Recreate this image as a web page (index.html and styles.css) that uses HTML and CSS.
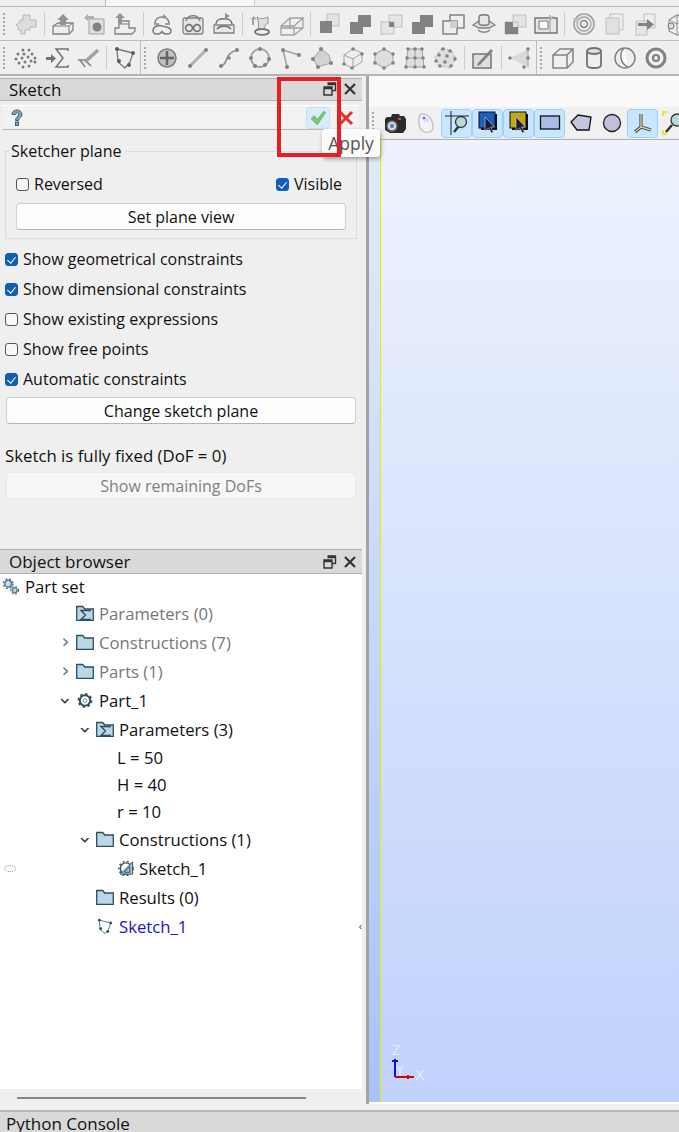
FILE: index.html
```html
<!DOCTYPE html>
<html lang="en">
<head>
<meta charset="utf-8">
<title>Sketch</title>
<link rel="stylesheet" href="styles.css">
</head>
<body>
<svg class="sprite" aria-hidden="true">
<defs>
<symbol id="i-puzzle" viewBox="0 0 24 24"><path d="M2 13l4-3V8h3V3h7v5h6v7h-6v3h-5v4H7v-4H4v-3z" fill="#dcdcdc" stroke="#b0b0b0"/></symbol>
<symbol id="i-extrude" viewBox="0 0 24 24"><path d="M2 22v-8l5-3h15v7l-4 4z" fill="#eee" stroke="#777" stroke-width="1.3"/><path d="M2 14h16v8M18 14l4-3" fill="none" stroke="#777"/><path d="M12 2l6 6h-3v5H9V8H6z" fill="#8a8a8a"/></symbol>
<symbol id="i-revolve" viewBox="0 0 24 24"><path d="M7 7h15v15H7z" fill="#ddd" stroke="#999"/><circle cx="15" cy="15" r="4.5" fill="#777"/><path d="M2 6l4-4v2h6v3H6v2z" fill="#aaa"/></symbol>
<symbol id="i-boxup" viewBox="0 0 24 24"><path d="M2 22v-6h4V9h10v7h6v3l-3 3z" fill="#eee" stroke="#777" stroke-width="1.3"/><path d="M6 12h10" stroke="#777"/><path d="M7 1l5 5H9v6H5V6H2z" fill="#8a8a8a"/></symbol>
<symbol id="i-pipe1" viewBox="0 0 24 24"><path d="M5 11C6 3 18 3 19 11M3 19c0-5 5-6 9-5s9 1 9 5c0 4-8 4-9 0-1 4-9 4-9 0zM4 12h5M15 12h5" fill="none" stroke="#777" stroke-width="1.6"/><path d="M13 2l4 3-4 2z" fill="#888"/></symbol>
<symbol id="i-pipe2" viewBox="0 0 24 24"><rect x="2" y="6" width="20" height="16" rx="2" fill="#e6e6e6" stroke="#777" stroke-width="1.3"/><circle cx="8" cy="16" r="3.4" fill="none" stroke="#666" stroke-width="1.6"/><circle cx="16" cy="16" r="3.4" fill="none" stroke="#666" stroke-width="1.6"/><path d="M5 9C7 2 17 2 19 9" fill="none" stroke="#777" stroke-width="1.5"/></symbol>
<symbol id="i-pipe3" viewBox="0 0 24 24"><path d="M2 13h20v8H2z" fill="#e6e6e6" stroke="#777" stroke-width="1.3"/><path d="M4 12c0-7 16-7 16 0M5 17c4-4 10-4 14 0" fill="none" stroke="#666" stroke-width="1.6"/><path d="M13 1l5 3-5 3z" fill="#888"/></symbol>
<symbol id="i-pipe4" viewBox="0 0 24 24"><path d="M8 5c3 2 7 2 11 0v6c-3 2-4 4-3 6H9c1-3 1-7-1-12z" fill="#ddd" stroke="#888"/><ellipse cx="13" cy="20" rx="7" ry="2.8" fill="none" stroke="#666" stroke-width="1.8"/><path d="M1 8l4-4 3 4-3-1v6H3V7z" fill="#999"/></symbol>
<symbol id="i-wire" viewBox="0 0 24 24"><path d="M1 14L10 6h13v10l-9 7H1zM1 14h13v9M14 14l9-8M10 6v10H1M10 16l13 0" fill="#eee" fill-opacity=".6" stroke="#999" stroke-width="1.3"/></symbol>
<symbol id="i-bool1" viewBox="0 0 24 24"><rect x="10" y="2" width="12" height="12" fill="#e2e2e2" stroke="#bbb"/><rect x="3" y="9" width="12" height="12" fill="#777"/></symbol>
<symbol id="i-bool2" viewBox="0 0 24 24"><rect x="10" y="3" width="13" height="12" fill="#777"/><rect x="2" y="10" width="13" height="12" fill="#777"/></symbol>
<symbol id="i-bool3" viewBox="0 0 24 24"><rect x="10" y="3" width="13" height="12" fill="#e4e4e4" stroke="#bbb"/><rect x="2" y="10" width="13" height="12" fill="#e4e4e4" stroke="#bbb"/><rect x="10" y="10" width="5" height="5" fill="#777"/></symbol>
<symbol id="i-bool4" viewBox="0 0 24 24"><rect x="9" y="3" width="14" height="13" fill="none" stroke="#777" stroke-width="1.5"/><rect x="2" y="9" width="14" height="13" fill="#eee" stroke="#777" stroke-width="1.5"/><rect x="9" y="9" width="7" height="7" fill="#ccc"/></symbol>
<symbol id="i-hat" viewBox="0 0 24 24"><path d="M1 13l6-4h10l6 4-6 3H7z" fill="#ddd" stroke="#777" stroke-width="1.3"/><path d="M7 5c0-3 10-3 10 0v6c0 3-10 3-10 0z" fill="#e6e6e6" stroke="#666" stroke-width="1.3"/><path d="M6 18c3 3 9 3 12 0" fill="none" stroke="#777" stroke-width="1.5"/></symbol>
<symbol id="i-bool5" viewBox="0 0 24 24"><rect x="10" y="3" width="13" height="12" fill="#e2e2e2" stroke="#bbb"/><rect x="2" y="10" width="13" height="12" fill="#e2e2e2" stroke="#bbb"/><path d="M2 10h8v5h5v7H2z" fill="#777"/></symbol>
<symbol id="i-frame" viewBox="0 0 24 24"><path d="M1 6h22v15H1z" fill="#e6e6e6" stroke="#666" stroke-width="1.4"/><path d="M5 9h9v8H5z" fill="#fff" stroke="#666"/><path d="M16 3v17M19 4l-5 7" stroke="#aaa" stroke-width="1.5"/></symbol>
<symbol id="i-spiral" viewBox="0 0 24 24"><circle cx="13" cy="12" r="10" fill="none" stroke="#999" stroke-width="1.6"/><circle cx="13" cy="12" r="7" fill="none" stroke="#999" stroke-width="1.4"/><circle cx="13" cy="12" r="3.5" fill="none" stroke="#777" stroke-width="1.5"/><path d="M1 6h7v5z" fill="#bbb"/></symbol>
<symbol id="i-pages" viewBox="0 0 24 24"><rect x="8" y="2" width="13" height="16" fill="#eee" stroke="#bbb"/><rect x="4" y="6" width="13" height="16" fill="#e0e0e0" stroke="#bbb"/></symbol>
<symbol id="i-move" viewBox="0 0 24 24"><rect x="11" y="2" width="11" height="14" fill="#eee" stroke="#bbb"/><rect x="3" y="9" width="11" height="14" fill="#e6e6e6" stroke="#bbb"/><path d="M5 11h9V7l7 5.500-7 5.500v-4H5z" fill="#777"/></symbol>
<symbol id="i-cut" viewBox="0 0 24 24"><path d="M5 8l8-5 9 3v12l-9 5-8-4z" fill="none" stroke="#888" stroke-width="1.2"/><path d="M13 3v20M5 8l8 4 9-6" fill="none" stroke="#888"/><circle cx="7" cy="14" r="3" fill="#ddd" stroke="#666"/></symbol>
<symbol id="i-dots" viewBox="0 0 24 24"><g fill="#6e6e6e"><circle cx="9" cy="4" r="1.500"/><circle cx="15" cy="4" r="1.500"/><circle cx="4" cy="8" r="1.500"/><circle cx="10" cy="8" r="1.500"/><circle cx="18" cy="8" r="1.500"/><circle cx="2" cy="13" r="1.500"/><circle cx="8" cy="12" r="1.500"/><circle cx="14" cy="11" r="1.500"/><circle cx="21" cy="12" r="1.500"/><circle cx="5" cy="17" r="1.500"/><circle cx="11" cy="16" r="1.500"/><circle cx="17" cy="15" r="1.500"/><circle cx="21" cy="16" r="1.500"/><circle cx="9" cy="21" r="1.500"/><circle cx="15" cy="20" r="1.500"/></g></symbol>
<symbol id="i-sigma" viewBox="0 0 24 24"><path d="M1 11h5V8l5 4.500L6 17v-3H1z" fill="#666"/><path d="M23 5V3H11l7 9-7 9h12v-2" fill="none" stroke="#666" stroke-width="1.500"/></symbol>
<symbol id="i-check" viewBox="0 0 24 24"><path d="M2 14h9M9 14l6 6M4 14l5 7" fill="none" stroke="#777" stroke-width="1.500"/><path d="M9 16L22 4" stroke="#999" stroke-width="3.500"/></symbol>
<symbol id="i-sketch" viewBox="0 0 24 24"><path d="M4 3l16 4-3 9-5 6-7-6z" fill="none" stroke="#56707c" stroke-width="1.300"/><g fill="#2e5563"><circle cx="4" cy="3" r="2"/><circle cx="20" cy="7" r="2"/><circle cx="6" cy="15" r="2"/><circle cx="16" cy="19" r="2"/></g></symbol>
<symbol id="i-point" viewBox="0 0 24 24"><circle cx="12" cy="12" r="9" fill="#bdbdbd" stroke="#707070" stroke-width="1.500"/><path d="M12 5v14M5 12h14" stroke="#555" stroke-width="2.500"/></symbol>
<symbol id="i-line" viewBox="0 0 24 24"><path d="M4 20L20 4" stroke="#aaa" stroke-width="3"/><circle cx="4" cy="20" r="2" fill="#777"/><circle cx="20" cy="4" r="2" fill="#777"/></symbol>
<symbol id="i-curve" viewBox="0 0 24 24"><path d="M4 20c8-2 2-12 16-16" fill="none" stroke="#888" stroke-width="1.800"/><g fill="#777"><circle cx="4" cy="20" r="2"/><circle cx="20" cy="4" r="2"/><circle cx="12" cy="12" r="1.800"/></g></symbol>
<symbol id="i-circle" viewBox="0 0 24 24"><circle cx="12" cy="12" r="9" fill="none" stroke="#999" stroke-width="1.800"/><g fill="#777"><circle cx="12" cy="3" r="2"/><circle cx="3" cy="12" r="2"/><circle cx="21" cy="13" r="2"/><circle cx="7" cy="20" r="2"/><circle cx="17" cy="19" r="2"/></g></symbol>
<symbol id="i-poly" viewBox="0 0 24 24"><path d="M4 4l16 5M4 4l4 17" fill="none" stroke="#999" stroke-width="1.500"/><g fill="#777"><circle cx="4" cy="4" r="2"/><circle cx="20" cy="9" r="2"/><circle cx="8" cy="21" r="2"/></g></symbol>
<symbol id="i-face" viewBox="0 0 24 24"><path d="M11 3l8 6 2 8-13 4-5-8z" fill="#d0d0d0" stroke="#999"/><g fill="#777"><circle cx="11" cy="3" r="2"/><circle cx="21" cy="17" r="2"/><circle cx="8" cy="21" r="2"/><circle cx="3" cy="13" r="2"/></g></symbol>
<symbol id="i-shell" viewBox="0 0 24 24"><path d="M3 9l9-6 9 4v9l-10 6-8-4zM3 9l9 4 9-6M12 13v9" fill="#eee" stroke="#999"/><g fill="#777"><circle cx="12" cy="3" r="1.800"/><circle cx="21" cy="8" r="1.800"/><circle cx="3" cy="18" r="1.800"/><circle cx="11" cy="22" r="1.800"/></g></symbol>
<symbol id="i-solid" viewBox="0 0 24 24"><path d="M3 8l9-5 9 5v9l-9 5-9-5z" fill="#ddd" stroke="#999"/><g fill="#777"><circle cx="12" cy="3" r="1.800"/><circle cx="21" cy="8" r="1.800"/><circle cx="3" cy="8" r="1.800"/><circle cx="3" cy="17" r="1.800"/><circle cx="21" cy="17" r="1.800"/><circle cx="12" cy="22" r="1.800"/></g></symbol>
<symbol id="i-comp" viewBox="0 0 24 24"><path d="M5 3h14l2 18H3z" fill="#ddd" stroke="#999"/><path d="M12 3v18M4 12h16" stroke="#999"/><g fill="#777"><circle cx="5" cy="3" r="1.800"/><circle cx="19" cy="3" r="1.800"/><circle cx="12" cy="3" r="1.800"/><circle cx="4" cy="12" r="1.800"/><circle cx="12" cy="12" r="1.800"/><circle cx="20" cy="12" r="1.800"/><circle cx="3" cy="21" r="1.800"/><circle cx="12" cy="21" r="1.800"/><circle cx="21" cy="21" r="1.800"/></g></symbol>
<symbol id="i-compd" viewBox="0 0 24 24"><path d="M8 2l10 3 4 8-6 9-12-3-3-8z" fill="#ddd" stroke="#aaa" stroke-dasharray="3 2"/><g fill="#777"><circle cx="9" cy="3" r="1.800"/><circle cx="16" cy="5" r="1.800"/><circle cx="5" cy="9" r="1.800"/><circle cx="13" cy="10" r="1.800"/><circle cx="21" cy="13" r="1.800"/><circle cx="2" cy="15" r="1.800"/><circle cx="11" cy="16" r="1.800"/><circle cx="17" cy="20" r="1.800"/><circle cx="6" cy="20" r="1.800"/></g></symbol>
<symbol id="i-edit" viewBox="0 0 24 24"><path d="M2 8h18v14H2z" fill="#ddd" stroke="#666" stroke-width="1.500"/><path d="M7 17l-1 3 3-1L22 5l-2-2z" fill="#777"/></symbol>
<symbol id="i-sector" viewBox="0 0 24 24"><path d="M2 12L20 3v18z" fill="#d8d8d8"/><path d="M20 3v18" stroke="#999"/><g fill="#777"><circle cx="2" cy="12" r="1.800"/><circle cx="20" cy="3" r="1.800"/><circle cx="20" cy="12" r="1.800"/><circle cx="16" cy="21" r="1.800"/></g></symbol>
<symbol id="i-box" viewBox="0 0 24 24"><path d="M2 9l7-6h13v13l-6 6H2zM2 9h14v13M16 9l6-6" fill="none" stroke="#777" stroke-width="1.500"/></symbol>
<symbol id="i-cyl" viewBox="0 0 24 24"><path d="M5 5v14c0 4 14 4 14 0V5" fill="none" stroke="#666" stroke-width="1.800"/><ellipse cx="12" cy="5" rx="7" ry="3" fill="#ddd" stroke="#666" stroke-width="1.800"/></symbol>
<symbol id="i-sphere" viewBox="0 0 24 24"><circle cx="12" cy="12" r="10" fill="#eee" stroke="#777" stroke-width="1.500"/><path d="M11 2c-6 7-3 16 4 19" fill="#fff" stroke="#777" stroke-width="1.500"/></symbol>
<symbol id="i-torus" viewBox="0 0 24 24"><circle cx="12" cy="12" r="9" fill="none" stroke="#777" stroke-width="3"/><circle cx="12" cy="12" r="3" fill="none" stroke="#777" stroke-width="2.200"/></symbol>
<symbol id="i-restore" viewBox="0 0 14 14"><path d="M4.500 1h8v7.500h-3M1 5h8v8H1zM1 6.500h8M4.500 2.500h8" fill="none" stroke="#333" stroke-width="1.400"/></symbol>
<symbol id="i-close" viewBox="0 0 14 14"><path d="M2 2l10 10M12 2L2 12" stroke="#333" stroke-width="2.200"/></symbol>
<symbol id="i-folder" viewBox="0 0 18 16"><path d="M.7 14.800V1h6l2 2.500h8.600v11.300z" fill="#b9d7e8" stroke="#2c4f5e" stroke-width="1.300"/></symbol>
<symbol id="i-param" viewBox="0 0 18 16"><path d="M.7 14.800V1h6l2 2.500h8.600v11.300z" fill="#b9d7e8" stroke="#2c4f5e" stroke-width="1.300"/><path d="M14 6V5H5l4.500 4.500L5 14h9v-1" fill="none" stroke="#2c4f5e" stroke-width="1.400"/></symbol>
<symbol id="i-gear" viewBox="0 0 18 18"><circle cx="9" cy="9" r="5.500" fill="none" stroke="#33515e" stroke-width="2.200"/><circle cx="9" cy="9" r="7" fill="none" stroke="#33515e" stroke-width="1.800" stroke-dasharray="2.500 3"/><circle cx="9" cy="9" r="2" fill="none" stroke="#6d8894"/></symbol>
<symbol id="i-gears" viewBox="0 0 18 18"><circle cx="6" cy="6" r="3.500" fill="#cfdfe8" stroke="#56788a" stroke-width="1.600"/><circle cx="6" cy="6" r="5" fill="none" stroke="#56788a" stroke-width="1.500" stroke-dasharray="2 2"/><circle cx="13" cy="13" r="2.500" fill="#cfdfe8" stroke="#56788a" stroke-width="1.400"/><circle cx="13" cy="13" r="4" fill="none" stroke="#56788a" stroke-width="1.400" stroke-dasharray="2 1.800"/></symbol>
<symbol id="i-sk-gear" viewBox="0 0 18 18"><circle cx="9" cy="9" r="6" fill="#fff" stroke="#33515e" stroke-width="1.500"/><circle cx="9" cy="9" r="7.500" fill="none" stroke="#33515e" stroke-width="1.500" stroke-dasharray="2 2.500"/><path d="M3 15L16 2v13zM7 13l6-6v6z" fill="#a9c5d4" stroke="#33515e"/></symbol>
<symbol id="i-camera" viewBox="0 0 24 24"><path d="M4 6h4l1-3h7l1 2h4l2 3v10l-3 4H7l-5-3V8z" fill="#2b2b2b"/><circle cx="9" cy="15" r="5" fill="#cfd8e6" stroke="#666" stroke-width="1.500"/><circle cx="9" cy="15" r="2" fill="#5d76b0"/><rect x="15" y="7" width="3" height="2" fill="#d43"/></symbol>
<symbol id="i-mouse" viewBox="0 0 24 24"><path d="M7 3c7-1 12 6 12 13 0 5-6 7-10 4C5 18 3 8 7 3z" fill="#f4f4f4" stroke="#c0c0c0" stroke-width="1.300"/><path d="M9 5c3 0 5 2 6 5-3 2-6 0-7-2z" fill="#d8dcec"/><circle cx="10" cy="7" r="1.300" fill="#6e74c9"/></symbol>
<symbol id="i-vzoom" viewBox="0 0 24 24"><path d="M6 0v24M0 5h24" stroke="#222" stroke-width="1"/><path d="M9 21l5-6" stroke="#333" stroke-width="2.500"/><circle cx="16" cy="11" r="5.500" fill="#b8d8d8" stroke="#333" stroke-width="1.300"/></symbol>
<symbol id="i-selblue" viewBox="0 0 24 24"><rect x="5" y="3" width="16" height="16" fill="#111"/><rect x="3" y="1" width="16" height="16" fill="#1c5fc0" stroke="#111"/><path d="M9 6v14l3.500-3 3 5 2-1-3-5h4z" fill="#1a1a3a" stroke="#d8d8e8" stroke-width=".6"/></symbol>
<symbol id="i-selyellow" viewBox="0 0 24 24"><rect x="5" y="3" width="16" height="16" fill="#111"/><rect x="3" y="1" width="16" height="16" fill="#c2a614" stroke="#111"/><path d="M9 6v14l3.500-3 3 5 2-1-3-5h4z" fill="#1a1a3a" stroke="#d8d8e8" stroke-width=".6"/></symbol>
<symbol id="i-rect" viewBox="0 0 24 24"><rect x="2.500" y="5" width="19" height="13" fill="#a9bce6" stroke="#111" stroke-width="1.300"/></symbol>
<symbol id="i-penta" viewBox="0 0 24 24"><path d="M2 11l7-7 13 2-2 13H8z" fill="#c5c5e0" stroke="#111" stroke-width="1.300"/></symbol>
<symbol id="i-round" viewBox="0 0 24 24"><circle cx="12" cy="12" r="8.500" fill="#c0c0dc" stroke="#222" stroke-width="1.300"/></symbol>
<symbol id="i-axes" viewBox="0 0 24 24"><path d="M10 3v13M10 16l-6 5M10 16l10 3" stroke="#333" stroke-width="3"/><path d="M10 3v13M10 16l-6 5M10 16l10 3" stroke="#d9d3a8" stroke-width="1.400"/></symbol>
<symbol id="i-vzoom2" viewBox="0 0 24 24"><path d="M1 5V1h4M1 19v4h4" fill="none" stroke="#e8e000" stroke-width="1.500"/><path d="M4 21l6-7" stroke="#333" stroke-width="2.500"/><circle cx="15" cy="9" r="6" fill="#b8d8d8" stroke="#333" stroke-width="1.300"/></symbol>
<symbol id="i-help" viewBox="0 0 14 18"><path d="M2 5.500C2 2 5 1 7 1s5 1.500 5 4.500c0 3-3.500 3-3.500 6H5.500C5.500 8 8.500 8 8.500 5.500 8.500 4 7.500 4 7 4 6 4 5.500 4.500 5.500 5.500z" fill="#7da3b8" stroke="#3f6072"/><rect x="5.500" y="13" width="3" height="3.500" fill="#7da3b8" stroke="#3f6072"/></symbol>
</defs>
</svg>

<div class="app">
  <div class="top-strip"><span class="strip-field"></span></div>

  <div class="tb-row">
    <span class="grip"></span>
    <span class="tool"><svg class="ico"><use href="#i-puzzle"/></svg></span>
    <span class="sep"></span>
    <span class="tool"><svg class="ico"><use href="#i-extrude"/></svg></span>
    <span class="tool"><svg class="ico"><use href="#i-revolve"/></svg></span>
    <span class="tool"><svg class="ico"><use href="#i-boxup"/></svg></span>
    <span class="sep"></span>
    <span class="tool"><svg class="ico"><use href="#i-pipe1"/></svg></span>
    <span class="tool"><svg class="ico"><use href="#i-pipe2"/></svg></span>
    <span class="tool"><svg class="ico"><use href="#i-pipe3"/></svg></span>
    <span class="sep"></span>
    <span class="tool"><svg class="ico"><use href="#i-pipe4"/></svg></span>
    <span class="tool"><svg class="ico"><use href="#i-wire"/></svg></span>
    <span class="sep"></span>
    <span class="tool"><svg class="ico"><use href="#i-bool1"/></svg></span>
    <span class="tool"><svg class="ico"><use href="#i-bool2"/></svg></span>
    <span class="tool"><svg class="ico"><use href="#i-bool3"/></svg></span>
    <span class="tool"><svg class="ico"><use href="#i-bool2"/></svg></span>
    <span class="tool"><svg class="ico"><use href="#i-bool4"/></svg></span>
    <span class="tool"><svg class="ico"><use href="#i-hat"/></svg></span>
    <span class="tool"><svg class="ico"><use href="#i-bool5"/></svg></span>
    <span class="tool"><svg class="ico"><use href="#i-frame"/></svg></span>
    <span class="sep"></span>
    <span class="tool"><svg class="ico"><use href="#i-spiral"/></svg></span>
    <span class="tool"><svg class="ico"><use href="#i-pages"/></svg></span>
    <span class="tool"><svg class="ico"><use href="#i-move"/></svg></span>
    <span class="tool"><svg class="ico"><use href="#i-cut"/></svg></span>
  </div>

  <div class="tb-row tb-row-2">
    <div class="tb-group tb-g1">
      <span class="grip"></span>
      <span class="tool"><svg class="ico"><use href="#i-dots"/></svg></span>
      <span class="tool"><svg class="ico"><use href="#i-sigma"/></svg></span>
      <span class="tool"><svg class="ico"><use href="#i-check"/></svg></span>
      <span class="sep"></span>
      <span class="tool"><svg class="ico"><use href="#i-sketch"/></svg></span>
    </div>
    <div class="tb-group tb-g2">
      <span class="grip"></span>
      <span class="tool"><svg class="ico"><use href="#i-point"/></svg></span>
      <span class="tool"><svg class="ico"><use href="#i-line"/></svg></span>
      <span class="tool"><svg class="ico"><use href="#i-curve"/></svg></span>
      <span class="tool"><svg class="ico"><use href="#i-circle"/></svg></span>
      <span class="tool"><svg class="ico"><use href="#i-poly"/></svg></span>
      <span class="tool"><svg class="ico"><use href="#i-face"/></svg></span>
      <span class="tool"><svg class="ico"><use href="#i-shell"/></svg></span>
      <span class="tool"><svg class="ico"><use href="#i-solid"/></svg></span>
      <span class="tool"><svg class="ico"><use href="#i-comp"/></svg></span>
      <span class="tool"><svg class="ico"><use href="#i-compd"/></svg></span>
      <span class="sep"></span>
      <span class="tool"><svg class="ico"><use href="#i-edit"/></svg></span>
      <span class="sep"></span>
      <span class="tool"><svg class="ico"><use href="#i-sector"/></svg></span>
    </div>
    <div class="tb-group">
      <span class="grip"></span>
      <span class="tool"><svg class="ico"><use href="#i-box"/></svg></span>
      <span class="tool"><svg class="ico"><use href="#i-cyl"/></svg></span>
      <span class="tool"><svg class="ico"><use href="#i-sphere"/></svg></span>
      <span class="tool"><svg class="ico"><use href="#i-torus"/></svg></span>
    </div>
  </div>

  <div class="workspace">
    <aside class="left">
      <section class="dock dock-sketch">
        <header class="dock-title title-sketch">
          <span>Sketch</span>
          <span class="dock-btns"><svg class="dbtn"><use href="#i-restore"/></svg><svg class="dbtn"><use href="#i-close"/></svg></span>
        </header>
        <div class="help-row">
          <svg class="help"><use href="#i-help"/></svg>
          <span class="apply-btn"><svg viewBox="0 0 24 24" class="apply-ico"><path d="M3 13l4-4 4 5L20 3l2 2-11 16z" fill="#7ecb6d" stroke="#5a9e55"/></svg></span>
          <svg viewBox="0 0 24 24" class="cancel-ico"><path d="M3 3l18 18M21 3L3 21" stroke="#e2322c" stroke-width="4.500"/></svg>
        </div>
        <fieldset class="group">
          <legend>Sketcher plane</legend>
          <div class="group-row">
            <label class="chk"><span class="box"></span>Reversed</label>
            <label class="chk"><span class="box on"></span>Visible</label>
          </div>
          <div class="btn">Set plane view</div>
        </fieldset>
        <div class="checks">
          <label class="chk"><span class="box on"></span>Show geometrical constraints</label>
          <label class="chk"><span class="box on"></span>Show dimensional constraints</label>
          <label class="chk"><span class="box"></span>Show existing expressions</label>
          <label class="chk"><span class="box"></span>Show free points</label>
          <label class="chk"><span class="box on"></span>Automatic constraints</label>
        </div>
        <div class="btn btn-wide">Change sketch plane</div>
        <div class="status">Sketch is fully fixed (DoF = 0)</div>
        <div class="btn btn-wide btn-off">Show remaining DoFs</div>
      </section>

      <section class="dock dock-browser">
        <header class="dock-title title-browser">
          <span>Object browser</span>
          <span class="dock-btns"><svg class="dbtn"><use href="#i-restore"/></svg><svg class="dbtn"><use href="#i-close"/></svg></span>
        </header>
        <div class="tree">
          <div class="node node-root"><svg class="ti ti-root"><use href="#i-gears"/></svg>Part set</div>
          <div class="node l1 dim"><span class="ar"></span><svg class="ti"><use href="#i-param"/></svg>Parameters (0)</div>
          <div class="node l1 dim"><span class="ar">&#8250;</span><svg class="ti"><use href="#i-folder"/></svg>Constructions (7)</div>
          <div class="node l1 dim"><span class="ar">&#8250;</span><svg class="ti"><use href="#i-folder"/></svg>Parts (1)</div>
          <div class="node l1"><span class="ar open">&#8250;</span><svg class="ti"><use href="#i-gear"/></svg>Part_1</div>
          <div class="node l2"><span class="ar open">&#8250;</span><svg class="ti"><use href="#i-param"/></svg>Parameters (3)</div>
          <div class="node leaf">L = 50</div>
          <div class="node leaf">H = 40</div>
          <div class="node leaf">r = 10</div>
          <div class="node l2"><span class="ar open">&#8250;</span><svg class="ti"><use href="#i-folder"/></svg>Constructions (1)</div>
          <div class="node l3"><span class="vis"></span><svg class="ti"><use href="#i-sk-gear"/></svg>Sketch_1</div>
          <div class="node l2"><span class="ar"></span><svg class="ti"><use href="#i-folder"/></svg>Results (0)</div>
          <div class="node l2 active"><span class="ar"></span><svg class="ti"><use href="#i-sketch"/></svg>Sketch_1</div>
          <span class="collapse">&#8249;</span>
        </div>
        <div class="hscroll"><span class="hthumb"></span></div>
      </section>
    </aside>

    <main class="right">
      <div class="view-head"></div>
      <div class="view-tools">
        <span class="grip grip-view"></span>
        <span class="vt"><svg class="ico"><use href="#i-camera"/></svg></span>
        <span class="vt"><svg class="ico"><use href="#i-mouse"/></svg></span>
        <span class="vt on"><svg class="ico"><use href="#i-vzoom"/></svg></span>
        <span class="vt on"><svg class="ico"><use href="#i-selblue"/></svg></span>
        <span class="vt on"><svg class="ico"><use href="#i-selyellow"/></svg></span>
        <span class="vt on"><svg class="ico"><use href="#i-rect"/></svg></span>
        <span class="vt"><svg class="ico"><use href="#i-penta"/></svg></span>
        <span class="vt"><svg class="ico"><use href="#i-round"/></svg></span>
        <span class="vt on"><svg class="ico"><use href="#i-axes"/></svg></span>
        <span class="vt"><svg class="ico"><use href="#i-vzoom2"/></svg></span>
      </div>
      <div class="canvas">
        <div class="canvas-main">
          <svg class="trihedron" viewBox="0 0 40 40">
            <path d="M4 30V12M1 14h6" stroke="#1010e0" stroke-width="2" fill="none"/>
            <path d="M4 30h19M17 28v4" stroke="#d80000" stroke-width="2" fill="none"/>
            <text x="1" y="8" class="axis-t">Z</text>
            <text x="5" y="28" class="axis-t">Y</text>
            <text x="25" y="33" class="axis-t">X</text>
          </svg>
        </div>
      </div>
      <div class="view-foot"></div>
    </main>
  </div>

  <div class="console-title">Python Console</div>

  <div class="tooltip">Apply</div>
  <div class="red-frame"></div>
</div>
</body>
</html>
```

FILE: styles.css
```css
* { box-sizing: border-box; }
html, body { margin: 0; padding: 0; }
body {
  width: 679px;
  height: 1132px;
  overflow: hidden;
  background: #efefef;
  font-family: "Open Sans", "Noto Sans", sans-serif;
  font-size: 16px;
  color: #111;
}
.sprite { position: absolute; width: 0; height: 0; }
.app { position: relative; width: 679px; height: 1132px; overflow: hidden; display: flex; flex-direction: column; }

.top-strip { height: 7px; border-bottom: 1px solid #bdbdbd; padding-left: 105px; flex: none; }
.strip-field { display: block; width: 150px; height: 6px; border-left: 1px solid #bbb; border-right: 1px solid #ccc; background: #f7f7f7; }

.tb-row { display: flex; align-items: center; height: 34px; flex: none; border-bottom: 1px solid #bdbdbd; overflow: hidden; }
.tb-row-2 { height: 35px; border-bottom: 2px solid #b4b4b4; align-items: stretch; }
.tb-group { display: flex; align-items: center; }
.tb-g1 { width: 141px; border-right: 1px solid #bdbdbd; }
.tb-g2 { width: 396px; border-right: 1px solid #bdbdbd; }
.grip { flex: none; width: 10px; height: 24px; margin: 0; background: radial-gradient(circle, #aaa 0.8px, transparent 1.1px) 2px 0 / 4px 4px repeat-y; }
.tool { flex: none; width: 31px; height: 30px; display: flex; align-items: center; justify-content: center; }
.tool .ico { filter: grayscale(1); opacity: .9; }
.ico { width: 24px; height: 24px; display: block; }
.sep { flex: none; width: 6px; height: 24px; display: block; background: linear-gradient(#ccc, #ccc) center / 1px 100% no-repeat; }

.workspace { display: flex; flex: 1; min-height: 0; }
.left { width: 362px; flex: none; display: flex; flex-direction: column; }
.dock-sketch { height: 473px; flex: none; padding-top: 2px; }
.dock-browser { flex: 1; min-height: 0; display: flex; flex-direction: column; }
.dock-title { display: flex; justify-content: space-between; align-items: center; height: 23px; padding: 0 5px 0 9px; background: #d9d9d9; border-top: 1px solid #b0b0b0; border-bottom: 1px solid #b0b0b0; font-size: 17px; flex: none; }
.title-sketch { padding-bottom: 1px; }
.title-browser { height: 25px; }
.dock-btns { display: flex; gap: 6px; align-items: center; }
.dbtn { width: 14px; height: 14px; display: block; }

.help-row { position: relative; margin: 4px 4px 0 3px; height: 25px; display: flex; align-items: center; justify-content: flex-end; gap: 8px; padding: 0 4px 0 7px; background: #f2f2f2; border-top: 1px solid #fff; border-bottom: 1px solid #b8b8b8; }
.help { width: 14px; height: 18px; margin-right: auto; }
.apply-btn { width: 24px; height: 22px; border-radius: 3px; background: #d8ecf9; border: 1px solid #c4e2f7; display: flex; align-items: center; justify-content: center; }
.apply-ico { width: 18px; height: 18px; }
.cancel-ico { width: 16px; height: 16px; }

.group { margin: 12px 5px 0 5px; padding: 0 10px 0 10px; height: 97px; border: 1px solid #dcdcdc; min-width: 0; }
.group legend { padding: 0 3px 0 2px; margin-left: -7px; line-height: 18px; }
.group-row { display: flex; justify-content: space-between; align-items: center; height: 26px; padding-right: 4px; margin-top: 11px; }

.chk { display: flex; align-items: center; gap: 5px; white-space: nowrap; }
.box { width: 13px; height: 13px; border: 1px solid #555; border-radius: 3px; background: #f8f8f8; flex: none; position: relative; }
.box.on { background: #0f5fb8; border-color: #0f5fb8; }
.box.on::after { content: ""; position: absolute; left: 3px; top: 1.500px; width: 4px; height: 7px; border: solid #fff; border-width: 0 1px 1px 0; transform: rotate(40deg); }

.btn { height: 27px; margin-top: 6px; background: #fdfdfd; border: 1px solid #cfcfcf; border-bottom-color: #b5b5b5; border-radius: 4px; display: flex; align-items: center; justify-content: center; }
.btn-wide { margin: 0 6px; }
.btn-off { background: #f7f7f7; border-color: #eaeaea; color: #808080; }

.checks { display: flex; flex-direction: column; margin: 5px 0 0 5px; }
.checks .chk { height: 30px; }
.checks + .btn { margin-top: 3px; }
.status { height: 26px; margin: 19px 0 0 5px; line-height: 26px; white-space: nowrap; font-size: 16.800px; }
.status + .btn { margin-top: 3px; }

.tree { position: relative; flex: 1; min-height: 0; background: #fff; font-size: 16.700px; }
.node { display: flex; align-items: center; height: 29px; white-space: nowrap; }
.node-root { height: 25px; padding-left: 2px; }
.ti { width: 18px; height: 17px; flex: none; margin-right: 5px; }
.ti-root { margin-right: 5px; }
.l1 { padding-left: 57px; }
.l2 { padding-left: 77px; }
.l3 { padding-left: 117px; position: relative; }
.l3 .ti { margin-right: 4px; }
.leaf { height: 27px; padding-left: 117px; }
.dim { color: #777; }
.active { color: #1a10d8; }
.ar { width: 19px; flex: none; text-align: center; color: #777; font-size: 20px; line-height: 20px; margin: -4px 1px 0 -1px; font-family: "DejaVu Sans", sans-serif; }
.ar.open { color: #333; transform: rotate(90deg); margin: 0 1px 0 -1px; }
.vis { position: absolute; left: 4px; top: 11px; width: 12px; height: 7px; border: 1px dotted #888; border-radius: 50%; }
.collapse { position: absolute; right: 0; top: 345px; font-size: 11px; line-height: 14px; color: #444; }

.hscroll { height: 21px; flex: none; display: flex; align-items: center; padding-left: 17px; }
.hthumb { display: block; width: 289px; height: 2px; background: #888; margin-top: -4px; }

.right { flex: 1; min-width: 0; display: flex; flex-direction: column; border-left: 4px solid #efefef; position: relative; }
.right::before { content: ""; position: absolute; left: 0; top: 0; bottom: 6px; width: 3px; background: #a3a3a3; }
.view-head { height: 31px; flex: none; margin-left: 3px; background: #f9f9f9; }
.view-tools { height: 33px; flex: none; margin-left: 3px; display: flex; align-items: center; border-bottom: 1px solid #b0b0b0; background: #f0f0f0; overflow: hidden; }
.grip-view { width: 10px; }
.vt { flex: none; width: 31px; height: 29px; display: flex; align-items: center; justify-content: center; border-radius: 4px; }
.vt.on { background: #c8e6ff; border: 1px solid #9ed0fb; }
.canvas { flex: 1; min-height: 0; margin-left: 3px; padding-left: 11px; background: linear-gradient(#e3ebfb, #a9c3f8); display: flex; }
.canvas-main { flex: 1; position: relative; border-left: 1px solid #e4ec00; background: linear-gradient(#edf2fd, #c0d2fc); }
.trihedron { position: absolute; left: 10px; bottom: 15px; width: 40px; height: 40px; overflow: visible; }
.axis-t { font-size: 14px; fill: #e8eefb; font-family: "Open Sans", sans-serif; }
.view-foot { height: 8px; flex: none; margin-left: -1px; background: linear-gradient(#fff 2px, #efefef 2px); }

.console-title { height: 22px; flex: none; padding-left: 6px; background: #d9d9d9; border-top: 2px solid #b8b8b8; font-size: 17px; line-height: 24px; white-space: nowrap; overflow: hidden; }

.tooltip { position: absolute; left: 322px; top: 129px; width: 58px; height: 28px; background: #fafafa; border-radius: 3px; box-shadow: 1px 2px 4px rgba(0,0,0,.35); color: #555; font-size: 17.500px; line-height: 28px; text-align: center; }
.red-frame { position: absolute; left: 277px; top: 77px; width: 64px; height: 80px; border: 4px solid #ea1c24; pointer-events: none; }
```
